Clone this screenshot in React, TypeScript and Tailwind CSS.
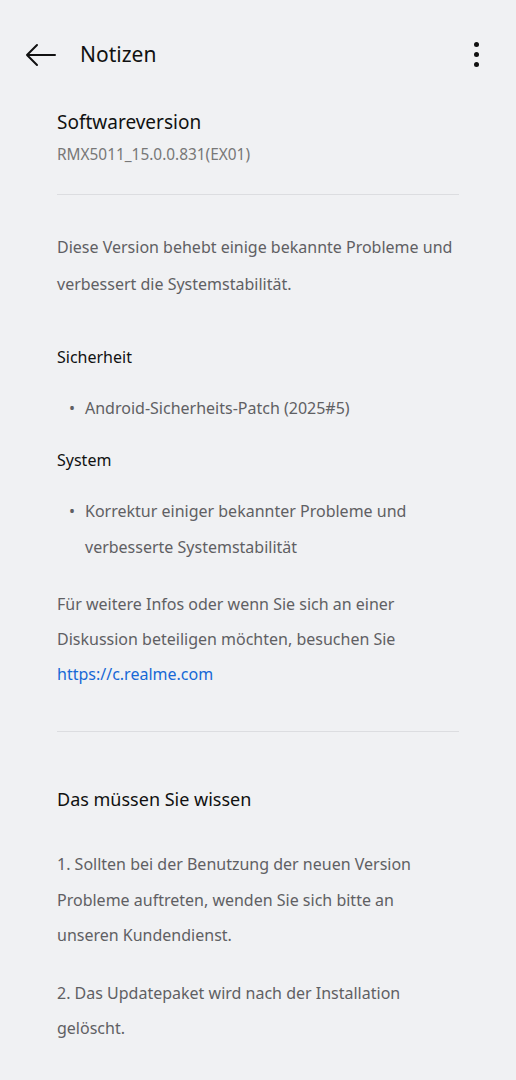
import React from "react";

const font = { fontFamily: '"Noto Sans", Roboto, sans-serif' };

export default function App() {
  return (
    <div className="min-h-screen w-[516px] bg-[#f0f1f3] text-[#111]" style={font}>
      <header className="flex h-[109px] items-center pl-[25px] pr-[37px]">
        <svg width="31" height="24" viewBox="0 0 31 24" fill="none" stroke="#111" strokeWidth="2" strokeLinecap="round" strokeLinejoin="round">
          <path d="M30 12H2M12 2L2 12l10 10" />
        </svg>
        <h1 className="ml-[24px] text-[21px] font-normal">Notizen</h1>
        <div className="ml-auto flex flex-col gap-[5px]">
          <span className="h-[5px] w-[5px] rounded-full bg-[#111]" />
          <span className="h-[5px] w-[5px] rounded-full bg-[#111]" />
          <span className="h-[5px] w-[5px] rounded-full bg-[#111]" />
        </div>
      </header>

      <main className="mx-[57px]">
        <h2 className="text-[19px] leading-[26px]">Softwareversion</h2>
        <p className="mt-[9px] text-[15.4px] leading-[22px] text-[#777]">RMX5011_15.0.0.831(EX01)</p>

        <div className="mt-[28px] border-t border-[#dcdde0]" />

        <p className="mt-[34px] text-[16px] leading-[37px] text-[#5f6063]">
          Diese Version behebt einige bekannte Probleme und verbessert die Systemstabilität.
        </p>

        <h3 className="mt-[41px] text-[16px] leading-[26px]">Sicherheit</h3>
        <ul className="mt-[20px] text-[16px] leading-[36px] text-[#5f6063]">
          <li className="flex">
            <span className="w-[28px] pl-[12px]">•</span>
            <span>Android-Sicherheits-Patch (2025#5)</span>
          </li>
        </ul>

        <h3 className="mt-[21px] text-[16px] leading-[26px]">System</h3>
        <ul className="mt-[20px] text-[16px] leading-[36px] text-[#5f6063]">
          <li className="flex">
            <span className="w-[28px] shrink-0 pl-[12px]">•</span>
            <span>Korrektur einiger bekannter Probleme und verbesserte Systemstabilität</span>
          </li>
        </ul>

        <p className="mt-[22px] text-[16px] leading-[35px] text-[#5f6063]">
          Für weitere Infos oder wenn Sie sich an einer Diskussion beteiligen möchten, besuchen Sie{" "}
          <a href="#" className="text-[#1768d6]">https://c.realme.com</a>
        </p>

        <div className="mt-[39px] border-t border-[#dcdde0]" />

        <h3 className="mt-[54px] text-[18px] leading-[26px]">Das müssen Sie wissen</h3>

        <p className="mt-[35px] text-[16px] leading-[35.5px] text-[#5f6063]">
          1. Sollten bei der Benutzung der neuen Version Probleme auftreten, wenden Sie sich bitte an unseren Kundendienst.
        </p>
        <p className="mt-[22px] text-[16px] leading-[35.5px] text-[#5f6063]">
          2. Das Updatepaket wird nach der Installation gelöscht.
        </p>
      </main>
    </div>
  );
}
